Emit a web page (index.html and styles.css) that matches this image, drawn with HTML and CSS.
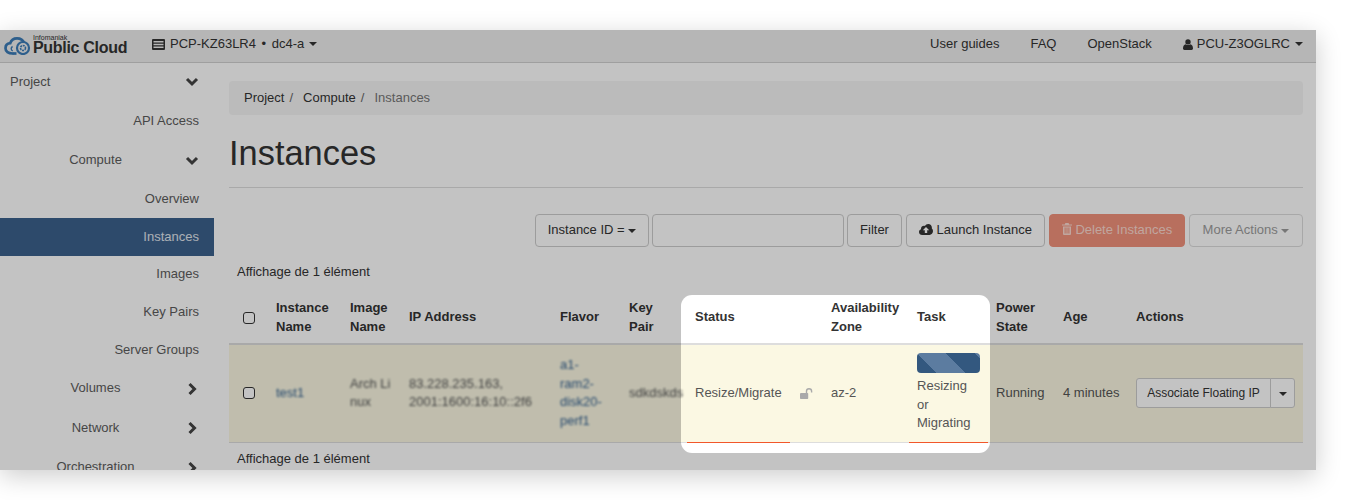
FILE: index.html
```html
<!DOCTYPE html>
<html lang="en">
<head>
<meta charset="utf-8">
<title>Instances</title>
<link rel="stylesheet" href="styles.css">
</head>
<body>
<div class="window">
  <header class="navbar">
    <div class="brand">
      <svg class="logo" viewBox="0 0 27 18" width="27" height="18">
        <path d="M8.5 16.5C4.4 16.5 1.5 14.6 1.5 11.2C1.5 8.4 3.4 6.5 6.2 6.2C7.2 3.2 9.8 1.4 13 1.4C16.5 1.4 19.2 3.4 20.2 6.2" fill="none" stroke="#3b7cb7" stroke-width="2.7" stroke-linecap="round"/>
        <path d="M8.5 16.5H12.5" fill="none" stroke="#3b7cb7" stroke-width="2.7"/>
        <path d="M8.6 9.5C6.7 10.4 6.7 13.2 8.8 13.8" fill="none" stroke="#3b7cb7" stroke-width="1.4"/>
        <circle cx="19" cy="11" r="6" fill="#eee" stroke="#3b7cb7" stroke-width="2.2"/>
        <circle cx="19" cy="11" r="2.5" fill="none" stroke="#3b7cb7" stroke-width="1.6" stroke-dasharray="2 .8"/>
      </svg>
      <div class="brand-text">
        <span class="brand-small">Infomaniak</span>
        <span class="brand-big">Public Cloud</span>
      </div>
    </div>
    <div class="project-pick">
      <svg class="nav-icon" viewBox="0 0 13 11" width="13" height="11">
        <path d="M1 0H12Q13 0 13 1V10Q13 11 12 11H1Q0 11 0 10V1Q0 0 1 0ZM1.5 2V3.5H11.5V2ZM1.5 4.7V6.2H11.5V4.7ZM1.5 7.4V8.9H11.5V7.4Z" fill="#333" fill-rule="evenodd"/>
      </svg>
      <span class="project-name">PCP-KZ63LR4 • dc4-a</span>
      <span class="caret"></span>
    </div>
    <nav class="top-links">
      <a>User guides</a>
      <a>FAQ</a>
      <a>OpenStack</a>
      <a class="user">
        <svg class="nav-icon" viewBox="0 0 10 11" width="10" height="11">
          <circle cx="5" cy="2.9" r="2.7" fill="#333"/>
          <path d="M0 9.6C0 6.8 1.2 5.4 2.6 5.2C3.3 5.8 4.1 6.1 5 6.1C5.9 6.1 6.7 5.8 7.4 5.2C8.8 5.4 10 6.8 10 9.6C10 10.5 9.4 11 8.6 11H1.4C.6 11 0 10.5 0 9.6Z" fill="#333"/>
        </svg>
        <span>PCU-Z3OGLRC</span>
        <span class="caret"></span>
      </a>
    </nav>
  </header>

  <div class="layout">
    <aside class="sidebar">
      <div class="nav-row level0"><span>Project</span>
        <svg class="chev" viewBox="0 0 14 10" width="14" height="10"><path d="M2 2L7 7L12 2" /></svg></div>
      <div class="nav-row leaf h40"><span>API Access</span></div>
      <div class="nav-row level1 h39"><span>Compute</span>
        <svg class="chev" viewBox="0 0 14 10" width="14" height="10"><path d="M2 2L7 7L12 2" /></svg></div>
      <div class="nav-row leaf"><span>Overview</span></div>
      <div class="nav-row leaf active"><span>Instances</span></div>
      <div class="nav-row leaf h37"><span>Images</span></div>
      <div class="nav-row leaf"><span>Key Pairs</span></div>
      <div class="nav-row leaf"><span>Server Groups</span></div>
      <div class="nav-row level1 h39"><span>Volumes</span>
        <svg class="chev" viewBox="0 0 14 14" width="14" height="14"><path d="M4.5 2L9.5 7L4.5 12" /></svg></div>
      <div class="nav-row level1 h40"><span>Network</span>
        <svg class="chev" viewBox="0 0 14 14" width="14" height="14"><path d="M4.5 2L9.5 7L4.5 12" /></svg></div>
      <div class="nav-row level1 h39"><span>Orchestration</span>
        <svg class="chev" viewBox="0 0 14 14" width="14" height="14"><path d="M4.5 2L9.5 7L4.5 12" /></svg></div>
    </aside>

    <main class="main">
      <ol class="breadcrumb">
        <li>Project</li>
        <li class="sep">/</li>
        <li>Compute</li>
        <li class="sep">/</li>
        <li class="current">Instances</li>
      </ol>
      <h1 class="title">Instances</h1>
      <hr class="rule">
      <div class="toolbar">
        <button class="btn w-id">Instance ID = <span class="caret"></span></button>
        <input class="search" type="text" aria-label="Filter">
        <button class="btn w-filter">Filter</button>
        <button class="btn w-launch">
          <svg class="btn-icon" viewBox="0 0 14 11" width="14" height="11">
            <path d="M3.2 11C1.4 11 0 9.7 0 8C0 6.7.8 5.6 2 5.2C2 5.1 2 5 2 4.8C2 3.1 3.4 1.8 5 1.8C5.3 1.8 5.6 1.9 5.9 2C6.6.8 7.8 0 9.2 0C11.3 0 12.9 1.7 12.9 3.7C12.9 4 12.9 4.3 12.8 4.6C13.6 5.2 14 6.1 14 7.1C14 9.3 12.4 11 10.5 11ZM7 3L3.8 6.3H5.8V9H8.2V6.3H10.2Z" fill="#333" fill-rule="evenodd"/>
          </svg>
          Launch Instance</button>
        <button class="btn btn-danger w-delete">
          <svg class="btn-icon" viewBox="0 0 10 12" width="10" height="12">
            <path d="M3.4 0H6.6L7.2 1.4H10V2.6H0V1.4H2.8ZM1 3.4H9V11Q9 12 8 12H2Q1 12 1 11ZM2.6 4.6V10.6H3.6V4.6ZM4.5 4.6V10.6H5.5V4.6ZM6.4 4.6V10.6H7.4V4.6Z" fill="#fbd9d0" fill-rule="evenodd"/>
          </svg>
          Delete Instances</button>
        <button class="btn btn-muted w-more">More Actions <span class="caret"></span></button>
      </div>
      <p class="count">Affichage de 1 élément</p>
      <table class="grid">
        <colgroup>
          <col class="c-check"><col class="c-name"><col class="c-image"><col class="c-ip"><col class="c-flavor"><col class="c-key"><col class="c-status"><col class="c-lock"><col class="c-zone"><col class="c-task"><col class="c-power"><col class="c-age"><col class="c-actions">
        </colgroup>
        <thead>
          <tr>
            <th><input class="check" type="checkbox" aria-label="Select all"></th>
            <th>Instance Name</th>
            <th>Image Name</th>
            <th>IP Address</th>
            <th>Flavor</th>
            <th>Key Pair</th>
            <th colspan="2">Status</th>
            <th>Availability Zone</th>
            <th>Task</th>
            <th>Power State</th>
            <th>Age</th>
            <th>Actions</th>
          </tr>
        </thead>
        <tbody>
          <tr class="row-warn">
            <td><input class="check" type="checkbox" aria-label="Select row"></td>
            <td><span class="blur link">test1</span></td>
            <td><span class="blur">Arch Li<br>nux</span></td>
            <td><span class="blur">83.228.235.163,<br>2001:1600:16:10::2f6</span></td>
            <td><span class="blur link">a1-<br>ram2-<br>disk20-<br>perf1</span></td>
            <td><span class="blur nowrap">sdkdskds</span></td>
            <td class="flag">Resize/Migrate</td>
            <td class="cell-lock">
              <svg viewBox="0 0 13 11" width="13" height="11">
                <path d="M1 5H7.5Q8.2 5 8.2 5.8V10.2Q8.2 11 7.5 11H.8Q0 11 0 10.2V5.8Q0 5 1 5Z" fill="#aaa"/>
                <path d="M6.5 5V3.2C6.5 1.7 7.6.8 9 .8C10.4.8 11.6 1.8 11.6 3.2V4.5" fill="none" stroke="#aaa" stroke-width="1.4"/>
              </svg>
            </td>
            <td>az-2</td>
            <td class="flag cell-task">
              <div class="progress"></div>
              Resizing or Migrating
            </td>
            <td>Running</td>
            <td>4 minutes</td>
            <td>
              <div class="split">
                <button class="split-main">Associate Floating IP</button>
                <button class="split-toggle" aria-label="More"><span class="caret"></span></button>
              </div>
            </td>
          </tr>
        </tbody>
        <tfoot>
          <tr><td colspan="13">Affichage de 1 élément</td></tr>
        </tfoot>
      </table>
    </main>
  </div>
  <div class="spotlight"></div>
</div>
</body>
</html>
```
FILE: styles.css
```css
* { box-sizing: border-box; }
html, body { margin: 0; padding: 0; background: #fff; }
body {
  height: 500px;
  overflow: hidden;
  padding-top: 30px;
  font-family: "Liberation Sans", Arial, sans-serif;
  font-size: 13px;
  line-height: 1.4286;
  color: #333;
}
.window {
  position: relative;
  width: 1316px;
  height: 440px;
  overflow: hidden;
  background: #fff;
  box-shadow: 0 6px 24px rgba(0, 0, 0, .2);
}
.spotlight {
  position: absolute;
  left: 681px;
  top: 265px;
  width: 309px;
  height: 158px;
  border-radius: 11px;
  box-shadow: 0 0 0 1600px rgba(0, 0, 0, .235);
  pointer-events: none;
}

/* top bar */
.navbar {
  display: flex;
  align-items: center;
  height: 33px;
  background: #eee;
  border-bottom: 1px solid #d0d0d0;
  padding: 0 13px 4px 0;
}
.brand { display: flex; align-items: center; width: 152px; padding-left: 4px; gap: 2px; }
.logo { flex: none; margin-top: 4px; }
.brand-text { display: flex; flex-direction: column; }
.brand-small { font-size: 7px; line-height: 7px; color: #333; }
.brand-big {
  font-size: 16px;
  line-height: 14px;
  font-weight: 700;
  letter-spacing: -.3px;
  color: #333;
  white-space: nowrap;
}
.project-pick { display: flex; align-items: center; gap: 5px; }
.project-name { word-spacing: 2px; }
.project-pick .caret { margin-left: 0; }
.top-links { margin-left: auto; display: flex; align-items: center; gap: 31px; }
.user { display: flex; align-items: center; gap: 4px; }
.caret {
  display: inline-block;
  width: 0;
  height: 0;
  border-top: 4px solid currentColor;
  border-left: 4px solid transparent;
  border-right: 4px solid transparent;
  vertical-align: middle;
}
.user .caret { margin-left: 1px; }

/* layout */
.layout { display: flex; }
.sidebar { width: 214px; flex: none; height: 407px; overflow: hidden; }
.nav-row {
  display: flex;
  align-items: center;
  justify-content: flex-end;
  height: 38px;
  color: #5c5c5c;
}
.h37 { height: 37px; }
.h39 { height: 39px; }
.h40 { height: 40px; }
.leaf { padding-right: 15px; }
.level0 { justify-content: space-between; padding: 0 15px 0 10px; }
.level1 { padding-right: 15px; }
.level1 span { flex: 1; text-align: center; padding-left: 6px; }
.level1 .chev { flex: none; }
.chev { fill: none; stroke: #444; stroke-width: 3; }
.active { background: #3c618c; color: #e0e6ee; }

/* main */
.main { flex: 1; min-width: 0; padding: 18px 13px 0 15px; }
.breadcrumb {
  display: flex;
  align-items: center;
  gap: 5px;
  height: 34px;
  margin: 0;
  padding: 0 15px;
  list-style: none;
  background: #f5f5f5;
  border-radius: 4px;
}
.breadcrumb .sep { color: #666; margin-right: 5px; }
.breadcrumb .current { color: #777; }
.title {
  margin: 19px 0 15px;
  font-size: 34.4px;
  font-weight: 400;
  line-height: 38px;
  color: #333;
}
.rule { margin: 0 0 26px; border: 0; border-top: 1px solid #ddd; }
.toolbar { display: flex; justify-content: flex-end; gap: 4px; height: 33px; }
.btn {
  height: 33px;
  padding: 0;
  border: 1px solid #ccc;
  border-radius: 4px;
  background: #fff;
  color: #333;
  font: inherit;
  white-space: nowrap;
}
.w-id { width: 114px; margin-right: -1px; }
.w-filter { width: 55px; margin-left: -1px; }
.w-launch { width: 139px; }
.w-delete { width: 136px; }
.w-more { width: 114px; }
.search { width: 192px; height: 33px; border: 1px solid #ccc; border-radius: 4px; background: #fff; }
.btn-icon { vertical-align: -1px; }
.btn-danger { background: #f1917b; border-color: #f1917b; color: #fbd9d0; }
.btn-muted { color: #9c9c9c; border-color: #dcdcdc; }

.count { margin: 15px 0 0 8px; height: 28px; line-height: 19px; }

/* table */
.grid { width: 1074px; table-layout: fixed; border-collapse: separate; border-spacing: 0; }
.c-check { width: 39px; }
.c-name { width: 74px; }
.c-image { width: 59px; }
.c-ip { width: 151px; }
.c-flavor { width: 69px; }
.c-key { width: 66px; }
.c-status { width: 103px; }
.c-lock { width: 33px; }
.c-zone { width: 86px; }
.c-task { width: 79px; }
.c-power { width: 67px; }
.c-age { width: 73px; }
.c-actions { width: 175px; }
.grid th {
  padding: 9px 8px 7px;
  font-weight: 700;
  text-align: left;
  vertical-align: middle;
  border-bottom: 2px solid #ddd;
}
.grid td {
  padding: 8px;
  color: #555;
  vertical-align: middle;
  border-bottom: 1px solid #ddd;
}
.grid tfoot td { padding-top: 7px; border-bottom: 0; color: #333; }
.row-warn td { background: #fbf8e3; }
.grid td.flag { border-bottom-color: #f2572b; }
.grid td.cell-task { padding-bottom: 9px; }
.grid td.cell-lock { padding: 0 0 0 10px; }
.cell-lock svg { display: block; }
.check {
  appearance: none;
  display: block;
  width: 12px;
  height: 12px;
  margin: 0 0 0 6px;
  border: 1.5px solid #333;
  border-radius: 3px;
  background: #fff;
}
.blur { display: inline-block; filter: blur(1.1px); color: #555; }
.blur.link { color: #33608f; }
.nowrap { white-space: nowrap; }
.progress {
  height: 20px;
  margin-bottom: 4px;
  border-radius: 4px;
  background-color: #33587f;
  background-image: linear-gradient(45deg, #5c7ca0 25%, transparent 25%, transparent 50%, #5c7ca0 50%, #5c7ca0 75%, transparent 75%, transparent);
  background-size: 58px 58px;
}
.split { display: flex; width: 159px; height: 30px; }
.split button {
  height: 30px;
  border: 1px solid #ccc;
  background: #fff;
  color: #333;
  font: inherit;
  font-size: 12px;
  padding: 0;
}
.split-main { width: 135px; border-radius: 3px 0 0 3px; }
.split-toggle { width: 25px; margin-left: -1px; border-radius: 0 3px 3px 0; }
```
